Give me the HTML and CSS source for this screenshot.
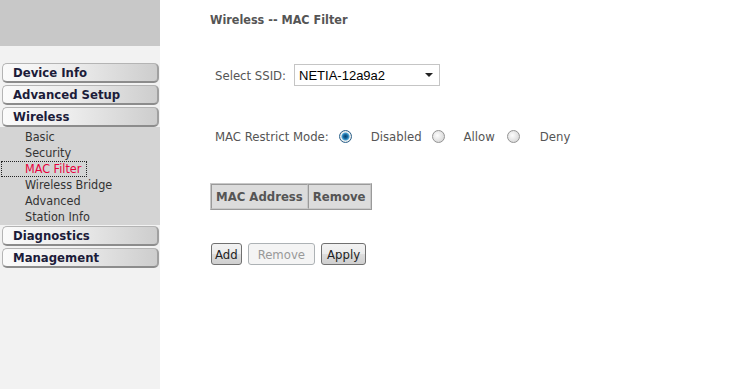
FILE: index.html
```html
<!DOCTYPE html>
<html lang="en">

<head>
    <meta charset="UTF-8">
    <title>Wireless -- MAC Filter</title>
    <link rel="stylesheet" href="styles.css">
</head>

<body>
    <aside class="sidebar">
        <div class="logo"></div>
        <nav class="menu">
            <a class="menu-item" href="#">Device Info</a>
            <a class="menu-item" href="#">Advanced Setup</a>
            <a class="menu-item" href="#">Wireless</a>
            <div class="submenu">
                <a href="#">Basic</a>
                <a href="#">Security</a>
                <a href="#" class="active">MAC Filter</a>
                <a href="#">Wireless Bridge</a>
                <a href="#">Advanced</a>
                <a href="#">Station Info</a>
            </div>
            <a class="menu-item" href="#">Diagnostics</a>
            <a class="menu-item" href="#">Management</a>
        </nav>
    </aside>

    <main class="content">
        <h1>Wireless -- MAC Filter</h1>

        <div class="row ssid-row">
            <span class="label">Select SSID:</span>
            <div class="select">
                <span>NETIA-12a9a2</span>
                <span class="arrow"></span>
            </div>
        </div>

        <div class="row mode-row">
            <span class="label">MAC Restrict Mode:</span>
            <input type="radio" name="mode" class="radio" checked>
            <span class="opt">Disabled</span>
            <input type="radio" name="mode" class="radio">
            <span class="opt">Allow</span>
            <input type="radio" name="mode" class="radio last">
            <span class="opt">Deny</span>
        </div>

        <table class="mac-table">
            <tr>
                <th>MAC Address</th>
                <th>Remove</th>
            </tr>
        </table>

        <div class="buttons">
            <button class="btn">Add</button>
            <button class="btn" disabled>Remove</button>
            <button class="btn wide">Apply</button>
        </div>
    </main>
</body>

</html>
```

FILE: styles.css
```css
* {
    box-sizing: border-box;
}

body {
    margin: 0;
    display: flex;
    min-height: 100vh;
    background-color: #fff;
    font-family: "DejaVu Sans Condensed", "DejaVu Sans", sans-serif;
    font-size: 12px;
    color: #555;
}

/* left navigation */
.sidebar {
    width: 160px;
    flex: none;
    display: flex;
    flex-direction: column;
    background-color: #f2f2f2;
}

.logo {
    height: 46px;
    background-color: #c8c8c8;
}

.menu {
    display: flex;
    flex-direction: column;
    padding-top: 17px;
}

.menu a {
    text-decoration: none;
}

.menu-item {
    display: block;
    height: 20px;
    margin: 0 1px 2px 2px;
    padding-left: 10px;
    border: 1px solid #b4b4b4;
    border-bottom: 2px solid #8c8c8c;
    border-right: 2px solid #a0a0a0;
    border-radius: 5px;
    background: linear-gradient(to right, #fbfbfb, #ececec 45%, #cdcdcd);
    color: #1c1c3a;
    font-weight: bold;
    font-size: 13px;
    line-height: 17px;
}

.submenu {
    display: flex;
    flex-direction: column;
    margin-top: -2px;
    margin-bottom: 1px;
    padding: 2px 0 0;
    background-color: #d4d4d4;
}

.submenu a {
    align-self: flex-start;
    height: 16px;
    margin-left: 1px;
    padding: 0 6px 0 24px;
    color: #333;
    font-size: 12.5px;
    line-height: 16px;
}

.submenu a.active {
    color: #e8003c;
    outline: 1px dotted #222;
    outline-offset: -1px;
}

/* page content */
.content {
    flex: 1;
    padding: 13px 0 0 50px;
}

h1 {
    margin: 0;
    font-size: 12.5px;
    line-height: 14px;
    font-weight: bold;
    color: #555;
}

.row {
    display: flex;
    align-items: center;
    padding-left: 5px;
    font-size: 13px;
}

.ssid-row {
    margin-top: 37px;
    height: 22px;
}

.select {
    display: flex;
    align-items: center;
    justify-content: space-between;
    width: 146px;
    height: 22px;
    margin-left: 8px;
    padding: 0 6px 0 4px;
    border: 1px solid #c5c5c5;
    font-family: "Liberation Sans", Arial, sans-serif;
    font-size: 13px;
    color: #000;
}

.arrow {
    width: 0;
    height: 0;
    border-left: 4px solid transparent;
    border-right: 4px solid transparent;
    border-top: 4px solid #222;
}

.mode-row {
    margin-top: 42px;
    height: 16px;
}

.radio {
    appearance: none;
    width: 13px;
    height: 13px;
    margin: 0 19px 0 10px;
    border: 1px solid #939393;
    border-radius: 50%;
    background: radial-gradient(circle at 40% 40%, #fdfdfd, #dcdcdc 70%, #cfcfcf);
}

.mode-row .opt + .radio {
    margin-left: 10px;
}

.mode-row .opt + .radio.last {
    margin-left: 12px;
    margin-right: 20px;
}

.radio:checked {
    border-color: #2c628b;
    background: radial-gradient(circle, #0a3f6a 0, #15659c 2px, #4aa3d4 3.5px, #f4f4f4 4.5px, #d8d8d8 6px);
}

.mac-table {
    margin-top: 39px;
    border: 1px solid;
    border-color: #c8c8c8 #9a9a9a #9a9a9a #c8c8c8;
    border-spacing: 0;
}

.mac-table th {
    height: 25px;
    padding: 0 4px;
    border: 1px solid;
    border-color: #9a9a9a #c8c8c8 #c8c8c8 #9a9a9a;
    background-color: #dcdcdc;
    color: #555;
    font-size: 13px;
    text-align: left;
}

.buttons {
    display: flex;
    gap: 6px;
    margin-top: 33px;
    padding-left: 1px;
}

.btn {
    height: 22px;
    padding: 0 3px;
    border: 1px solid #707070;
    border-radius: 3px;
    background: linear-gradient(#f2f2f2, #ebebeb 50%, #dddddd 50%, #cfcfcf);
    font-family: inherit;
    font-size: 13px;
    color: #222;
}

.btn.wide {
    padding: 0 5px;
}

.btn:disabled {
    padding: 0 9px;
    border-color: #adb2b5;
    background: #f4f4f4;
    color: #999;
}
```
